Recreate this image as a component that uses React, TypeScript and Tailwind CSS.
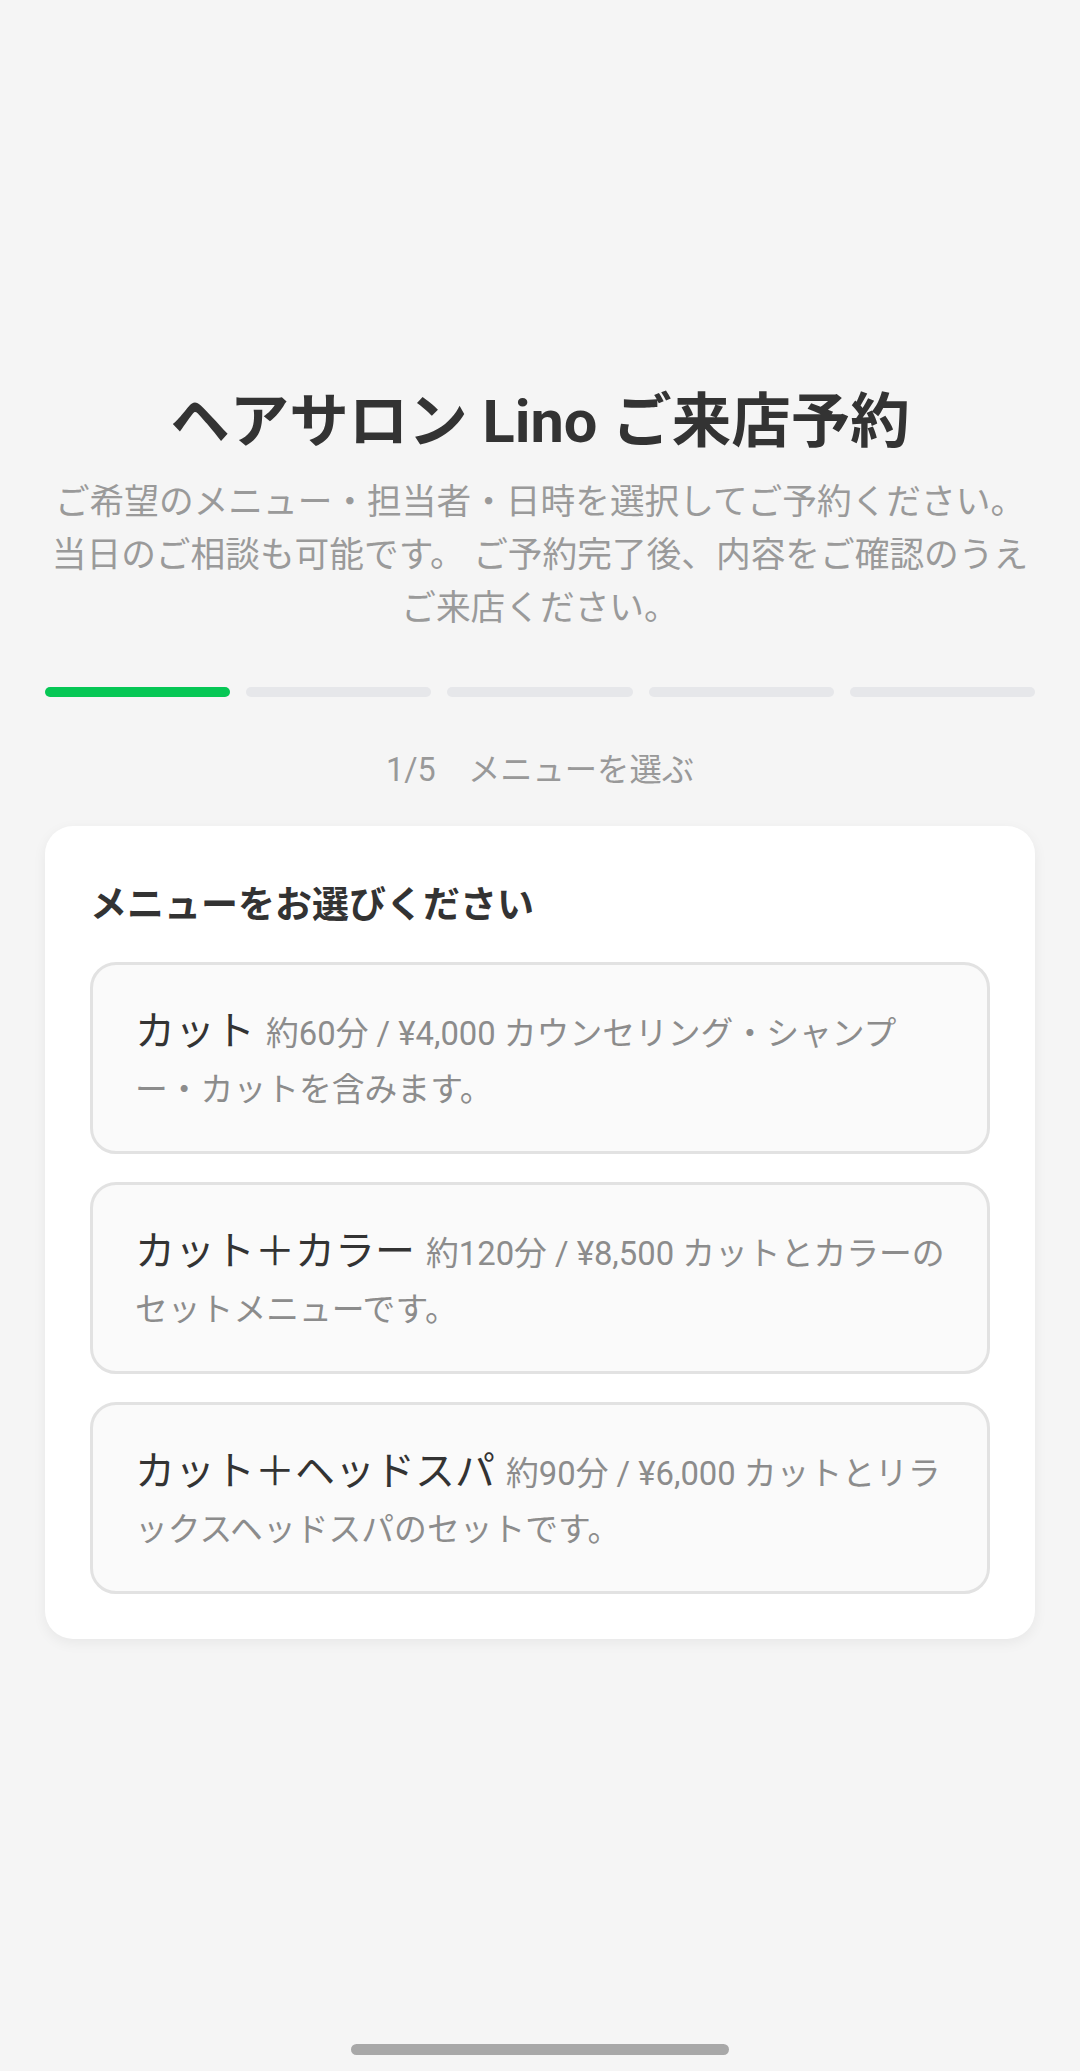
import React from 'react';

const MENUS = [
  { name: 'カット', meta: '約60分 / ¥4,000', desc: 'カウンセリング・シャンプー・カットを含みます。' },
  { name: 'カット＋カラー', meta: '約120分 / ¥8,500', desc: 'カットとカラーのセットメニューです。' },
  { name: 'カット＋ヘッドスパ', meta: '約90分 / ¥6,000', desc: 'カットとリラックスヘッドスパのセットです。' },
];

const STEPS = 5;
const CURRENT = 1;

export default function App() {
  return (
    <div
      className="min-h-screen bg-[#f5f5f5] text-[#333]"
      style={{ fontFamily: 'Roboto, "Noto Sans CJK JP", sans-serif' }}
    >
      <main className="px-[45px] pt-[382px] pb-[120px]">
        <h1 className="text-center text-[59.5px] font-bold leading-[80px] text-[#333]">
          ヘアサロン Lino ご来店予約
        </h1>
        <p className="mt-[14px] text-center text-[34.7px] leading-[53px] text-[#9a9a9a]">
          ご希望のメニュー・担当者・日時を選択してご予約ください。 当日のご相談も可能です。 ご予約完了後、内容をご確認のうえご来店ください。
        </p>

        {/* progress */}
        <div className="mt-[52px] flex gap-[16px]">
          {Array.from({ length: STEPS }).map((_, i) => (
            <div
              key={i}
              className={`h-[10px] flex-1 rounded-full ${i < CURRENT ? 'bg-[#06c755]' : 'bg-[#e6e7ea]'}`}
            />
          ))}
        </div>

        <div className="mt-[51px] text-center text-[32.3px] leading-[44px] text-[#999]">
          1/5　メニューを選ぶ
        </div>

        <section className="mt-[34px] rounded-[28px] bg-white px-[45px] pt-[52px] pb-[45px] shadow-[0_4px_14px_rgba(0,0,0,0.06)]">
          <h2 className="text-[37px] font-bold leading-[56px] text-[#333]">メニューをお選びください</h2>
          <div className="mt-[28px] flex flex-col gap-[28px]">
            {MENUS.map((m) => (
              <button
                key={m.name}
                type="button"
                className="rounded-[26px] border-[3px] border-[#e2e2e2] bg-[#fafafa] pl-[42px] pr-[34px] pt-[41px] pb-[33px] text-left text-[33px] leading-[55px]"
              >
                <span className="mr-[11px] text-[40px] leading-[40px] text-[#333]">{m.name}</span>
                <span className="text-[32.8px] leading-[55px] text-[#8c8c8c]">
                  {m.meta} {m.desc}
                </span>
              </button>
            ))}
          </div>
        </section>
      </main>

      <div className="fixed bottom-[16px] left-1/2 h-[11px] w-[378px] -translate-x-1/2 rounded-full bg-[#a8a8a8]" />
    </div>
  );
}
